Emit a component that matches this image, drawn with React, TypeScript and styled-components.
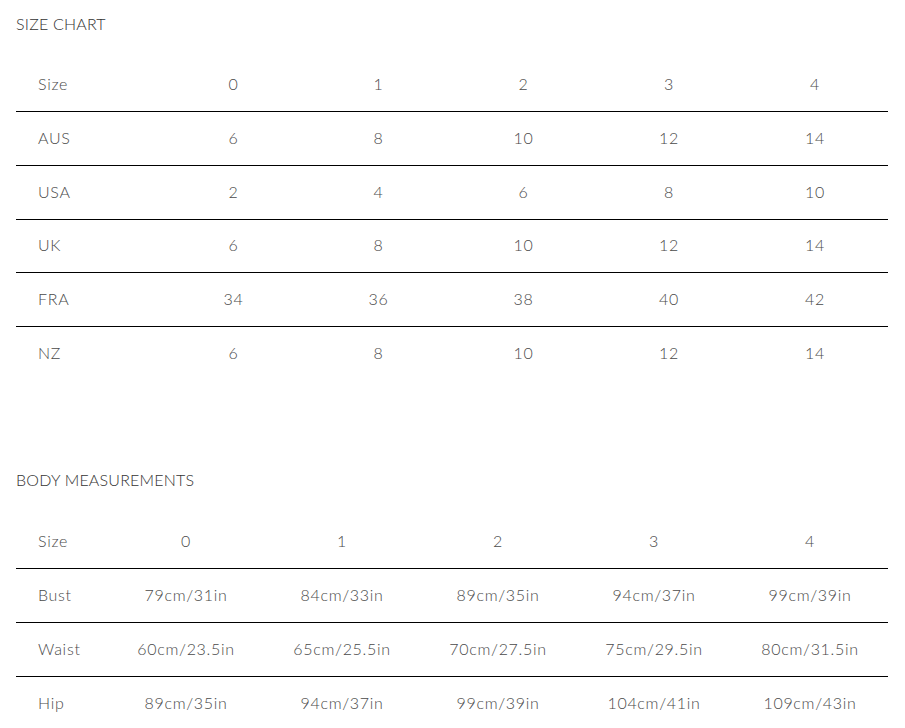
import React from "react";
import styled, { createGlobalStyle } from "styled-components";

const Global = createGlobalStyle`
  html, body { margin: 0; padding: 0; background: #fff; }
  body { font-family: "Lato", "Liberation Sans", sans-serif; font-weight: 300; color: #444; }
`;

const Page = styled.div`
  padding: 14px 17px 0 16px;
  width: 872px;
`;

const Title = styled.h2<{ $gap: number }>`
  margin: 0 0 ${(p) => p.$gap}px 0;
  font-size: 16px;
  line-height: 20px;
  font-weight: 300;
  color: #333;
  letter-spacing: 0.2px;
`;

const Table = styled.table`
  width: 872px;
  border-collapse: collapse;
  table-layout: fixed;
  margin-bottom: 90px;
`;

const Row = styled.tr<{ $line: boolean }>`
  height: 53.7px;
  border-bottom: ${(p) => (p.$line ? "1px solid #000" : "none")};
`;

const Cell = styled.td<{ $label?: boolean }>`
  padding: 0 0 1px ${(p) => (p.$label ? "22px" : "0")};
  text-align: ${(p) => (p.$label ? "left" : "center")};
  font-size: 16px;
  line-height: 20px;
  color: #4a4a4a;
  letter-spacing: 0.7px;
  vertical-align: middle;
`;

const sizeRows = [
  ["Size", "0", "1", "2", "3", "4"],
  ["AUS", "6", "8", "10", "12", "14"],
  ["USA", "2", "4", "6", "8", "10"],
  ["UK", "6", "8", "10", "12", "14"],
  ["FRA", "34", "36", "38", "40", "42"],
  ["NZ", "6", "8", "10", "12", "14"],
];

const bodyRows = [
  ["Size", "0", "1", "2", "3", "4"],
  ["Bust", "79cm/31in", "84cm/33in", "89cm/35in", "94cm/37in", "99cm/39in"],
  ["Waist", "60cm/23.5in", "65cm/25.5in", "70cm/27.5in", "75cm/29.5in", "80cm/31.5in"],
  ["Hip", "89cm/35in", "94cm/37in", "99cm/39in", "104cm/41in", "109cm/43in"],
];

function Chart({ rows, widths }: { rows: string[][]; widths: number[] }) {
  return (
    <Table>
      <colgroup>
        {widths.map((w, i) => (
          <col key={i} style={{ width: w }} />
        ))}
      </colgroup>
      <tbody>
        {rows.map((r, i) => (
          <Row key={i} $line={i < rows.length - 1}>
            {r.map((c, j) => (
              <Cell key={j} $label={j === 0}>
                {c}
              </Cell>
            ))}
          </Row>
        ))}
      </tbody>
    </Table>
  );
}

export default function App() {
  return (
    <Page>
      <Global />
      <Title $gap={24}>SIZE CHART</Title>
      <Chart rows={sizeRows} widths={[145, 145, 145, 145, 146, 146]} />
      <Title $gap={25}>BODY MEASUREMENTS</Title>
      <Chart rows={bodyRows} widths={[92, 156, 156, 156, 156, 156]} />
    </Page>
  );
}
